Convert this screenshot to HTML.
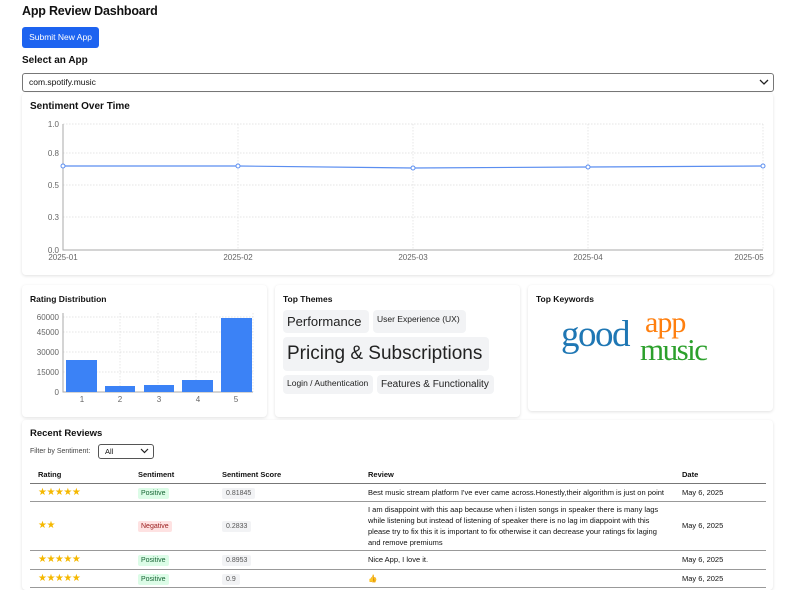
<!DOCTYPE html>
<html><head><meta charset="utf-8"><style>
*{box-sizing:border-box;margin:0;padding:0}
body{width:793px;height:577px;overflow:hidden;background:#fff;font-family:"Liberation Sans",Arial,sans-serif;color:#111;position:relative}
.abs{position:absolute}
.card{position:absolute;background:#fff;border-radius:4px;box-shadow:0 1px 3px rgba(0,0,0,.12)}
.tag{position:absolute;background:#f2f3f5;border-radius:4px;color:#222;white-space:nowrap;padding:0 4px}
table{border-collapse:collapse;position:absolute;left:30px;top:467px;width:736px;font-size:7.5px}
th{text-align:left;font-weight:bold;height:16px;padding-left:8px;border-bottom:1.5px solid #777}
td{padding-left:8px;border-bottom:1.5px solid #999;vertical-align:middle}
.pos{background:#dcfce7;color:#166534;padding:2px 3px;border-radius:2px;font-size:7px}
.neg{background:#fee2e2;color:#991b1b;padding:2px 3px;border-radius:2px;font-size:7px}
.sc{background:#f2f3f5;color:#555;padding:2px 4px;border-radius:2px;font-size:7px}
.st{color:#f5b800;font-size:10px;letter-spacing:-0.5px}
</style></head><body>
<div class="abs" style="left:22px;top:4px;font-size:12.5px;font-weight:bold;letter-spacing:-0.2px">App Review Dashboard</div>
<div class="abs" style="left:22px;top:27px;width:77px;height:21px;background:#1d63f0;border-radius:3px;color:#fff;font-size:8.5px;line-height:21px;text-align:center">Submit New App</div>
<div class="abs" style="left:22px;top:55px;font-size:10px;font-weight:bold">Select an App</div>
<div class="abs" style="left:22px;top:73px;width:752px;height:19px;border:1px solid #777;border-radius:3px;font-size:8.5px;line-height:17px;padding-left:6px">com.spotify.music
<svg class="abs" style="right:4px;top:5px" width="10" height="7"><path d="M1 1l4 4 4-4" fill="none" stroke="#222" stroke-width="1.3"/></svg></div>

<div class="card" style="left:22px;top:93px;width:751px;height:182px"></div>
<div class="abs" style="left:30px;top:101px;font-size:10px;font-weight:bold">Sentiment Over Time</div>
<svg class="abs" style="left:0;top:0" width="793" height="280" font-size="8" fill="#666">
<g stroke="#ddd" stroke-dasharray="1.5 1.5" stroke-width="0.7">
<line x1="63" y1="124" x2="763" y2="124"/><line x1="63" y1="153" x2="763" y2="153"/><line x1="63" y1="185" x2="763" y2="185"/><line x1="63" y1="217" x2="763" y2="217"/>
<line x1="238" y1="124" x2="238" y2="250"/><line x1="413" y1="124" x2="413" y2="250"/><line x1="588" y1="124" x2="588" y2="250"/><line x1="763" y1="124" x2="763" y2="250"/></g>
<path d="M63 124V250H763" fill="none" stroke="#aaa"/>
<polyline points="63,166 238,166 413,168 588,167 763,166" fill="none" stroke="#5b8ef0" stroke-width="1.2"/>
<g fill="#fff" stroke="#5b8ef0"><circle cx="63" cy="166" r="2"/><circle cx="238" cy="166" r="2"/><circle cx="413" cy="168" r="2"/><circle cx="588" cy="167" r="2"/><circle cx="763" cy="166" r="2"/></g>
<g text-anchor="end"><text x="59" y="127">1.0</text><text x="59" y="156">0.8</text><text x="59" y="188">0.5</text><text x="59" y="220">0.3</text><text x="59" y="253">0.0</text></g>
<g text-anchor="middle"><text x="63" y="260">2025-01</text><text x="238" y="260">2025-02</text><text x="413" y="260">2025-03</text><text x="588" y="260">2025-04</text><text x="749" y="260">2025-05</text></g>
</svg>

<div class="card" style="left:22px;top:285px;width:245px;height:132px"></div>
<div class="abs" style="left:30px;top:294px;font-size:8.5px;font-weight:bold">Rating Distribution</div>
<svg class="abs" style="left:0;top:280px" width="280" height="140" font-size="8" fill="#666">
<g stroke="#ddd" stroke-dasharray="1.5 1.5" stroke-width="0.7"><line x1="63" y1="37" x2="253" y2="37"/><line x1="63" y1="52" x2="253" y2="52"/><line x1="63" y1="72" x2="253" y2="72"/><line x1="63" y1="92" x2="253" y2="92"/>
<line x1="120" y1="33" x2="120" y2="112"/><line x1="158" y1="33" x2="158" y2="112"/><line x1="196" y1="33" x2="196" y2="112"/><line x1="253" y1="33" x2="253" y2="112"/></g>
<path d="M63 33V112H253" fill="none" stroke="#aaa"/>
<g fill="#3b82f6"><rect x="66" y="80" width="31" height="32"/><rect x="105" y="106" width="30" height="6"/><rect x="144" y="105" width="30" height="7"/><rect x="182" y="100" width="31" height="12"/><rect x="221" y="38" width="31" height="74"/></g>
<g text-anchor="end"><text x="59" y="40">60000</text><text x="59" y="55">45000</text><text x="59" y="75">30000</text><text x="59" y="95">15000</text><text x="59" y="115">0</text></g>
<g text-anchor="middle"><text x="82" y="122">1</text><text x="120" y="122">2</text><text x="159" y="122">3</text><text x="198" y="122">4</text><text x="236" y="122">5</text></g>
</svg>

<div class="card" style="left:275px;top:285px;width:245px;height:132px"></div>
<div class="abs" style="left:283px;top:294px;font-size:8.5px;font-weight:bold">Top Themes</div>
<div class="tag" style="left:283px;top:310px;width:86px;height:23px;line-height:23px;font-size:13px">Performance</div>
<div class="tag" style="left:373px;top:310px;width:93px;height:23px;line-height:18px;font-size:8.5px">User Experience (UX)</div>
<div class="tag" style="left:283px;top:337px;width:206px;height:34px;line-height:34px;font-size:19px">Pricing &amp; Subscriptions</div>
<div class="tag" style="left:283px;top:375px;width:90px;height:19px;line-height:16px;font-size:8.5px">Login / Authentication</div>
<div class="tag" style="left:377px;top:375px;width:117px;height:19px;line-height:19px;font-size:10px">Features &amp; Functionality</div>

<div class="card" style="left:528px;top:285px;width:245px;height:126px"></div>
<div class="abs" style="left:536px;top:294px;font-size:8.5px;font-weight:bold">Top Keywords</div>
<div class="abs" style="left:561px;top:316px;font-family:'Liberation Serif',serif;font-size:37px;color:#1f77b4;letter-spacing:-1.5px;line-height:1">good</div>
<div class="abs" style="left:645px;top:308px;font-family:'Liberation Serif',serif;font-size:30px;color:#ff7f0e;letter-spacing:-1px;line-height:1">app</div>
<div class="abs" style="left:640px;top:334px;font-family:'Liberation Serif',serif;font-size:31px;color:#2ca02c;letter-spacing:-1.5px;line-height:1">music</div>

<div class="card" style="left:22px;top:420px;width:751px;height:170px"></div>
<div class="abs" style="left:30px;top:428px;font-size:9.5px;font-weight:bold">Recent Reviews</div>
<div class="abs" style="left:30px;top:448px;font-size:7px;color:#444">Filter by Sentiment:</div>
<div class="abs" style="left:98px;top:444px;width:56px;height:15px;border:1px solid #555;border-radius:3px;font-size:7.5px;line-height:13px;padding-left:6px">All
<svg class="abs" style="right:4px;top:3px" width="9" height="6"><path d="M1 1l3.5 3.5 3.5-3.5" fill="none" stroke="#222" stroke-width="1.2"/></svg></div>
<table>
<tr><th style="width:100px">Rating</th><th style="width:84px">Sentiment</th><th style="width:146px">Sentiment Score</th><th style="width:314px">Review</th><th>Date</th></tr>
<tr style="height:18px"><td class="st">★★★★★</td><td><span class="pos">Positive</span></td><td><span class="sc">0.81845</span></td><td style="white-space:nowrap">Best music stream platform I've ever came across.Honestly,their algorithm is just on point</td><td>May 6, 2025</td></tr>
<tr style="height:49px"><td class="st">★★</td><td><span class="neg">Negative</span></td><td><span class="sc">0.2833</span></td><td style="line-height:11px;padding-right:4px">I am disappoint with this aap because when i listen songs in speaker there is many lags while listening but instead of listening of speaker there is no lag im diappoint with this please try to fix this it is important to fix otherwise it can decrease your ratings fix laging and remove premiums</td><td>May 6, 2025</td></tr>
<tr style="height:19px"><td class="st">★★★★★</td><td><span class="pos">Positive</span></td><td><span class="sc">0.8953</span></td><td>Nice App, I love it.</td><td>May 6, 2025</td></tr>
<tr style="height:18px"><td class="st">★★★★★</td><td><span class="pos">Positive</span></td><td><span class="sc">0.9</span></td><td>👍</td><td>May 6, 2025</td></tr>
</table>
</body></html>
